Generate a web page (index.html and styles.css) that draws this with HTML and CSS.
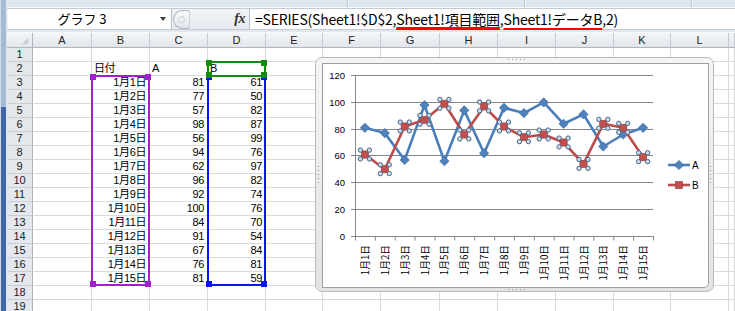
FILE: index.html
```html
<!DOCTYPE html>
<html lang="ja">
<head>
<meta charset="utf-8">
<link rel="stylesheet" href="styles.css">
</head>
<body>
<div class="app">
  <div class="edge"></div>
  <div class="main">
    <div class="ribbon">
      <div class="rgrp w1"></div><div class="rgrp w2"></div><div class="rgrp w3"></div><div class="rgrp w4"></div>
    </div>
    <div class="fbar">
      <div class="namebox"><span class="nb-text">グラフ 3</span><span class="nb-arrow"></span></div>
      <div class="grip"><span class="grip-dot"></span></div>
      <div class="fxwrap"><span class="fx">fx</span></div>
      <div class="formula">=SERIES(Sheet1!$D$2,<span class="mark">Sheet1!項目範囲</span>,<span class="mark m2">Sheet1!データB</span>,2)</div>
    </div>
    <div class="sep"></div>
    <div class="sheet">
      <div class="hrow"><div class="corner"><span class="tri"></span></div><div class="ch">A</div><div class="ch">B</div><div class="ch">C</div><div class="ch">D</div><div class="ch">E</div><div class="ch">F</div><div class="ch">G</div><div class="ch">H</div><div class="ch">I</div><div class="ch">J</div><div class="ch">K</div><div class="ch">L</div><div class="ch"></div></div>
      <div class="row"><div class="rh">1</div><div class="c"></div><div class="c"></div><div class="c"></div><div class="c"></div><div class="c"></div><div class="c"></div><div class="c"></div><div class="c"></div><div class="c"></div><div class="c"></div><div class="c"></div><div class="c"></div><div class="c"></div></div>
      <div class="row"><div class="rh">2</div><div class="c"></div><div class="c">日付</div><div class="c">A</div><div class="c">B</div><div class="c"></div><div class="c"></div><div class="c"></div><div class="c"></div><div class="c"></div><div class="c"></div><div class="c"></div><div class="c"></div><div class="c"></div></div>
      <div class="row"><div class="rh">3</div><div class="c"></div><div class="c r">1月1日</div><div class="c r">81</div><div class="c r">61</div><div class="c"></div><div class="c"></div><div class="c"></div><div class="c"></div><div class="c"></div><div class="c"></div><div class="c"></div><div class="c"></div><div class="c"></div></div>
      <div class="row"><div class="rh">4</div><div class="c"></div><div class="c r">1月2日</div><div class="c r">77</div><div class="c r">50</div><div class="c"></div><div class="c"></div><div class="c"></div><div class="c"></div><div class="c"></div><div class="c"></div><div class="c"></div><div class="c"></div><div class="c"></div></div>
      <div class="row"><div class="rh">5</div><div class="c"></div><div class="c r">1月3日</div><div class="c r">57</div><div class="c r">82</div><div class="c"></div><div class="c"></div><div class="c"></div><div class="c"></div><div class="c"></div><div class="c"></div><div class="c"></div><div class="c"></div><div class="c"></div></div>
      <div class="row"><div class="rh">6</div><div class="c"></div><div class="c r">1月4日</div><div class="c r">98</div><div class="c r">87</div><div class="c"></div><div class="c"></div><div class="c"></div><div class="c"></div><div class="c"></div><div class="c"></div><div class="c"></div><div class="c"></div><div class="c"></div></div>
      <div class="row"><div class="rh">7</div><div class="c"></div><div class="c r">1月5日</div><div class="c r">56</div><div class="c r">99</div><div class="c"></div><div class="c"></div><div class="c"></div><div class="c"></div><div class="c"></div><div class="c"></div><div class="c"></div><div class="c"></div><div class="c"></div></div>
      <div class="row"><div class="rh">8</div><div class="c"></div><div class="c r">1月6日</div><div class="c r">94</div><div class="c r">76</div><div class="c"></div><div class="c"></div><div class="c"></div><div class="c"></div><div class="c"></div><div class="c"></div><div class="c"></div><div class="c"></div><div class="c"></div></div>
      <div class="row"><div class="rh">9</div><div class="c"></div><div class="c r">1月7日</div><div class="c r">62</div><div class="c r">97</div><div class="c"></div><div class="c"></div><div class="c"></div><div class="c"></div><div class="c"></div><div class="c"></div><div class="c"></div><div class="c"></div><div class="c"></div></div>
      <div class="row"><div class="rh">10</div><div class="c"></div><div class="c r">1月8日</div><div class="c r">96</div><div class="c r">82</div><div class="c"></div><div class="c"></div><div class="c"></div><div class="c"></div><div class="c"></div><div class="c"></div><div class="c"></div><div class="c"></div><div class="c"></div></div>
      <div class="row"><div class="rh">11</div><div class="c"></div><div class="c r">1月9日</div><div class="c r">92</div><div class="c r">74</div><div class="c"></div><div class="c"></div><div class="c"></div><div class="c"></div><div class="c"></div><div class="c"></div><div class="c"></div><div class="c"></div><div class="c"></div></div>
      <div class="row"><div class="rh">12</div><div class="c"></div><div class="c r">1月10日</div><div class="c r">100</div><div class="c r">76</div><div class="c"></div><div class="c"></div><div class="c"></div><div class="c"></div><div class="c"></div><div class="c"></div><div class="c"></div><div class="c"></div><div class="c"></div></div>
      <div class="row"><div class="rh">13</div><div class="c"></div><div class="c r">1月11日</div><div class="c r">84</div><div class="c r">70</div><div class="c"></div><div class="c"></div><div class="c"></div><div class="c"></div><div class="c"></div><div class="c"></div><div class="c"></div><div class="c"></div><div class="c"></div></div>
      <div class="row"><div class="rh">14</div><div class="c"></div><div class="c r">1月12日</div><div class="c r">91</div><div class="c r">54</div><div class="c"></div><div class="c"></div><div class="c"></div><div class="c"></div><div class="c"></div><div class="c"></div><div class="c"></div><div class="c"></div><div class="c"></div></div>
      <div class="row"><div class="rh">15</div><div class="c"></div><div class="c r">1月13日</div><div class="c r">67</div><div class="c r">84</div><div class="c"></div><div class="c"></div><div class="c"></div><div class="c"></div><div class="c"></div><div class="c"></div><div class="c"></div><div class="c"></div><div class="c"></div></div>
      <div class="row"><div class="rh">16</div><div class="c"></div><div class="c r">1月14日</div><div class="c r">76</div><div class="c r">81</div><div class="c"></div><div class="c"></div><div class="c"></div><div class="c"></div><div class="c"></div><div class="c"></div><div class="c"></div><div class="c"></div><div class="c"></div></div>
      <div class="row"><div class="rh">17</div><div class="c"></div><div class="c r">1月15日</div><div class="c r">81</div><div class="c r">59</div><div class="c"></div><div class="c"></div><div class="c"></div><div class="c"></div><div class="c"></div><div class="c"></div><div class="c"></div><div class="c"></div><div class="c"></div></div>
      <div class="row"><div class="rh">18</div><div class="c"></div><div class="c"></div><div class="c"></div><div class="c"></div><div class="c"></div><div class="c"></div><div class="c"></div><div class="c"></div><div class="c"></div><div class="c"></div><div class="c"></div><div class="c"></div><div class="c"></div></div>
      <div class="row"><div class="rh">19</div><div class="c"></div><div class="c"></div><div class="c"></div><div class="c"></div><div class="c"></div><div class="c"></div><div class="c"></div><div class="c"></div><div class="c"></div><div class="c"></div><div class="c"></div><div class="c"></div><div class="c"></div></div>

      <div class="sel sel-purple"><span class="h tl"></span><span class="h tr"></span><span class="h bl"></span><span class="h br"></span></div>
      <div class="sel sel-blue"><span class="h tl"></span><span class="h tr"></span><span class="h bl"></span><span class="h br"></span></div>
      <div class="sel sel-green"><span class="h tl"></span><span class="h tr"></span><span class="h bl"></span><span class="h br"></span></div>

      <div class="chart">
        <span class="dots dt"></span><span class="dots db"></span><span class="dots dl"></span><span class="dots dr"></span>
        <div class="plot">
          <svg width="385" height="223" viewBox="8 7 385 223" xmlns="http://www.w3.org/2000/svg">
            <defs>
              <path id="dia" d="M0,-4.6 L4.6,0 L0,4.6 L-4.6,0Z" fill="#4f81bd" stroke="#3d6ea8" stroke-width="0.8"/>
              <rect id="sq" x="-3.6" y="-3.6" width="7.2" height="7.2" fill="#c0504d" stroke="#9a3b39" stroke-width="0.6"/>
              <g id="hd" fill="#c8dcf0" stroke="#4a6480" stroke-width="1">
                <circle cx="-4.5" cy="-4.4" r="2.2"/><circle cx="4.5" cy="-4.4" r="2.2"/>
                <circle cx="-4.5" cy="4.4" r="2.2"/><circle cx="4.5" cy="4.4" r="2.2"/>
              </g>
            </defs>
            <path d="M40,18.5 H338 M40,45.5 H338 M40,72.5 H338 M40,98.5 H338 M40,125.5 H338 M40,152.5 H338 M40,179.5 H338" stroke="#878787" stroke-width="1" fill="none"/>
            <path d="M40.5,18.5 V179.5 M36,18.5 h4 M36,45.5 h4 M36,72.5 h4 M36,98.5 h4 M36,125.5 h4 M36,152.5 h4 M36,179.5 h4" stroke="#878787" stroke-width="1" fill="none"/>
            <path d="M40.5,179 v4.5 M60.4,179 v4.5 M80.2,179 v4.5 M100.1,179 v4.5 M120,179 v4.5 M139.8,179 v4.5 M159.7,179 v4.5 M179.6,179 v4.5 M199.4,179 v4.5 M219.3,179 v4.5 M239.2,179 v4.5 M259,179 v4.5 M278.9,179 v4.5 M298.8,179 v4.5 M318.6,179 v4.5 M338.5,179 v4.5" stroke="#878787" stroke-width="1" fill="none"/>
            <g class="ylab" text-anchor="end">
              <text x="30" y="22">120</text><text x="30" y="49">100</text><text x="30" y="76">80</text><text x="30" y="102">60</text><text x="30" y="129">40</text><text x="30" y="156">20</text><text x="30" y="183">0</text>
            </g>
            <g class="xlab" text-anchor="end" dominant-baseline="central">
              <text transform="translate(49.9,188) rotate(-90)">1月1日</text>
              <text transform="translate(69.8,188) rotate(-90)">1月2日</text>
              <text transform="translate(89.7,188) rotate(-90)">1月3日</text>
              <text transform="translate(109.5,188) rotate(-90)">1月4日</text>
              <text transform="translate(129.4,188) rotate(-90)">1月5日</text>
              <text transform="translate(149.3,188) rotate(-90)">1月6日</text>
              <text transform="translate(169.1,188) rotate(-90)">1月7日</text>
              <text transform="translate(189,188) rotate(-90)">1月8日</text>
              <text transform="translate(208.9,188) rotate(-90)">1月9日</text>
              <text transform="translate(228.7,188) rotate(-90)">1月10日</text>
              <text transform="translate(248.6,188) rotate(-90)">1月11日</text>
              <text transform="translate(268.5,188) rotate(-90)">1月12日</text>
              <text transform="translate(288.3,188) rotate(-90)">1月13日</text>
              <text transform="translate(308.2,188) rotate(-90)">1月14日</text>
              <text transform="translate(328.1,188) rotate(-90)">1月15日</text>
            </g>
            <polyline points="49.9,70.8 69.8,76.1 89.7,102.9 109.5,48.1 129.4,104.2 149.3,53.4 169.1,96.2 189,50.8 208.9,56.1 228.7,45.4 248.6,66.8 268.5,57.4 288.3,89.5 308.2,77.5 328.1,70.8" fill="none" stroke="#4a7ebb" stroke-width="2.6" stroke-linejoin="round"/>
            <use href="#dia" x="49.9" y="70.8"/><use href="#dia" x="69.8" y="76.1"/><use href="#dia" x="89.7" y="102.9"/><use href="#dia" x="109.5" y="48.1"/><use href="#dia" x="129.4" y="104.2"/><use href="#dia" x="149.3" y="53.4"/><use href="#dia" x="169.1" y="96.2"/><use href="#dia" x="189" y="50.8"/><use href="#dia" x="208.9" y="56.1"/><use href="#dia" x="228.7" y="45.4"/><use href="#dia" x="248.6" y="66.8"/><use href="#dia" x="268.5" y="57.4"/><use href="#dia" x="288.3" y="89.5"/><use href="#dia" x="308.2" y="77.5"/><use href="#dia" x="328.1" y="70.8"/>
            <polyline points="49.9,97.5 69.8,112.2 89.7,69.5 109.5,62.8 129.4,46.8 149.3,77.5 169.1,49.4 189,69.5 208.9,80.2 228.7,77.5 248.6,85.5 268.5,106.9 288.3,66.8 308.2,70.8 328.1,100.2" fill="none" stroke="#be4b48" stroke-width="2.6" stroke-linejoin="round"/>
            <use href="#sq" x="49.9" y="97.5"/><use href="#sq" x="69.8" y="112.2"/><use href="#sq" x="89.7" y="69.5"/><use href="#sq" x="109.5" y="62.8"/><use href="#sq" x="129.4" y="46.8"/><use href="#sq" x="149.3" y="77.5"/><use href="#sq" x="169.1" y="49.4"/><use href="#sq" x="189" y="69.5"/><use href="#sq" x="208.9" y="80.2"/><use href="#sq" x="228.7" y="77.5"/><use href="#sq" x="248.6" y="85.5"/><use href="#sq" x="268.5" y="106.9"/><use href="#sq" x="288.3" y="66.8"/><use href="#sq" x="308.2" y="70.8"/><use href="#sq" x="328.1" y="100.2"/>
            <use href="#hd" x="49.9" y="97.5"/><use href="#hd" x="69.8" y="112.2"/><use href="#hd" x="89.7" y="69.5"/><use href="#hd" x="109.5" y="62.8"/><use href="#hd" x="129.4" y="46.8"/><use href="#hd" x="149.3" y="77.5"/><use href="#hd" x="169.1" y="49.4"/><use href="#hd" x="189" y="69.5"/><use href="#hd" x="208.9" y="80.2"/><use href="#hd" x="228.7" y="77.5"/><use href="#hd" x="248.6" y="85.5"/><use href="#hd" x="268.5" y="106.9"/><use href="#hd" x="288.3" y="66.8"/><use href="#hd" x="308.2" y="70.8"/><use href="#hd" x="328.1" y="100.2"/>
            <g class="legend">
              <path d="M353,108 H375" stroke="#4a7ebb" stroke-width="2.6"/>
              <use href="#dia" x="364" y="108"/>
              <text x="377" y="111.5">A</text>
              <path d="M353,128 H375" stroke="#be4b48" stroke-width="2.6"/>
              <use href="#sq" x="364" y="128"/>
              <text x="377" y="131.5">B</text>
            </g>
          </svg>
        </div>
      </div>
    </div>
  </div>
</div>
</body>
</html>
```

FILE: styles.css
```css
* { box-sizing: border-box; margin: 0; padding: 0; }
html, body { width: 735px; height: 311px; overflow: hidden; background: #fff; }
body { font-family: "Noto Sans CJK JP", "Liberation Sans", sans-serif; color: #000; }

.app { display: flex; width: 735px; height: 311px; }
.edge {
  width: 7px; flex: none;
  background: linear-gradient(to bottom, #a7bad3 0, #a7bad3 107px, #3e68a6 107px, #3e68a6 100%);
  box-shadow: inset 1px 0 0 #d3dce8, inset -1px 0 0 #dfe6ef;
}
.main { flex: 1; display: flex; flex-direction: column; min-width: 0; }

.ribbon { height: 8px; display: flex; background: #dde5ef; border-bottom: 1px solid #f6f8fb; }
.rgrp { height: 100%; border-right: 1px solid #b8c5d6; box-shadow: 1px 0 0 #f3f6fa; }
.w1 { width: 341px; }
.w2 { width: 177px; }
.w3 { width: 167px; }
.w4 { flex: 1; border-right: 0; box-shadow: none; }

.fbar {
  height: 22px; display: flex; align-items: stretch;
  background: linear-gradient(#f2f4f7, #e6eaef);
  border-top: 1px solid #c3cad3; border-bottom: 1px solid #c3cad3;
}
.namebox {
  margin-left: 1px; width: 164px; background: #fff;
  border-right: 1px solid #b7bfca; display: flex; align-items: center;
}
.nb-text { flex: 1; text-align: center; font-size: 13px; line-height: 20px; padding-left: 4px; }
.nb-arrow {
  width: 0; height: 0; margin: 0 5px 0 8px;
  border-left: 3px solid transparent; border-right: 3px solid transparent; border-top: 4px solid #3a3a3a;
}
.grip {
  width: 17px; height: 19px; margin: 0 0 0 1px; align-self: center;
  border: 1px solid #aeb6c1; border-right-color: #c9cfd7;
  border-radius: 10px 3px 3px 10px;
  background: linear-gradient(#fbfcfd, #dfe3e8);
  display: flex; align-items: center; justify-content: center;
}
.grip-dot { width: 7px; height: 7px; border-radius: 50%; background: #eef1f4; border: 1px solid #c7cdd5; }
.fxwrap { width: 59px; display: flex; align-items: center; justify-content: flex-end; padding-right: 4px; }
.fx { font-family: "Liberation Serif", serif; font-style: italic; font-weight: bold; font-size: 14px; color: #333; letter-spacing: -0.5px; }
.formula {
  flex: 1; background: #fff; border-left: 1px solid #b7bfca;
  padding-left: 5px; font-size: 14px; line-height: 20px; white-space: nowrap;
  letter-spacing: -0.2px;
}
.mark { text-decoration: underline; text-decoration-color: #f00; text-decoration-thickness: 2.5px; text-underline-offset: 2px; }
.m2 { text-underline-offset: 3px; }

.sep { height: 3px; background: #e2e7ed; border-bottom: 1px solid #f7f9fb; }

.sheet { position: relative; flex: 1; overflow: hidden; }
.hrow, .row {
  display: grid;
  grid-template-columns: 26px 59px 58px 58px 58px 57px 58px 59px 58px 58px 58px 57px 58px 1fr;
}
.hrow { height: 15px; }
.row { height: 14px; }

.corner, .ch {
  background: linear-gradient(#f3f5f8, #e2e6eb);
  border-right: 1px solid #c5cad2; border-bottom: 1px solid #aeb5bf;
}
.corner { display: flex; align-items: flex-end; justify-content: flex-end; padding: 0 4px 3px 0; border-right-color: #aeb5bf; }
.tri { width: 0; height: 0; border-left: 6px solid transparent; border-bottom: 6px solid #c9ced5; }
.ch { font-family: "Liberation Sans", "Noto Sans CJK JP", sans-serif; font-size: 11px; line-height: 14px; text-align: center; color: #222; }

.rh {
  background: #e4e8ed; border-right: 1px solid #aeb5bf; border-bottom: 1px solid #c9ced5;
  font-family: "Liberation Sans", "Noto Sans CJK JP", sans-serif;
  font-size: 11px; line-height: 13px; text-align: center; color: #222;
}
.c {
  border-right: 1px solid #d8dadd; border-bottom: 1px solid #d8dadd;
  font-family: "Liberation Sans", "Noto Sans CJK JP", sans-serif;
  font-size: 11px; line-height: 13px; padding: 0 3px 0 2px; white-space: nowrap;
  letter-spacing: -0.4px;
}
.c.r { text-align: right; }

.sel { position: absolute; border: 2px solid; }
.sel-purple { left: 84px; top: 42px; width: 59px; height: 211px; border-color: #a21fcf; }
.sel-blue { left: 200px; top: 42px; width: 59px; height: 211px; border-color: #0a14f0; }
.sel-green { left: 200px; top: 28px; width: 59px; height: 16px; border-color: #118a11; }
.h { position: absolute; width: 6px; height: 6px; }
.sel-purple .h { background: #a21fcf; }
.sel-blue .h { background: #0a14f0; }
.sel-green .h { background: #118a11; }
.tl { left: -3px; top: -3px; }
.tr { right: -3px; top: -3px; }
.bl { left: -3px; bottom: -3px; }
.br { right: -3px; bottom: -3px; }

.chart {
  position: absolute; left: 308px; top: 24px; width: 399px; height: 235px;
  border: 1px solid #b9b9b9; border-radius: 7px;
  background: linear-gradient(#f5f5f5, #e3e3e3);
  padding: 6px 5px 4px 7px;
}
.plot {
  width: 385px; height: 223px; background: #fff;
  box-shadow: 0 0 0 1px #9f9f9f; border-radius: 0 0 4px 0;
}
.plot svg { display: block; }
.ylab text { font-family: "Liberation Sans", sans-serif; font-size: 9.5px; fill: #000; }
.xlab text { font-family: "Noto Sans CJK JP", sans-serif; font-size: 9.7px; fill: #000; }
.legend text { font-family: "Liberation Sans", sans-serif; font-size: 10px; fill: #000; }

.dots { position: absolute; }
.dt, .db { width: 17px; height: 1px; left: 192px; background: repeating-linear-gradient(to right, #8a8a8a 0 1px, transparent 1px 4px); }
.dt { top: 1px; }
.db { bottom: 1px; }
.dl, .dr { width: 1px; height: 17px; top: 108px; background: repeating-linear-gradient(to bottom, #8a8a8a 0 1px, transparent 1px 4px); }
.dl { left: 2px; }
.dr { right: 2px; }
```
